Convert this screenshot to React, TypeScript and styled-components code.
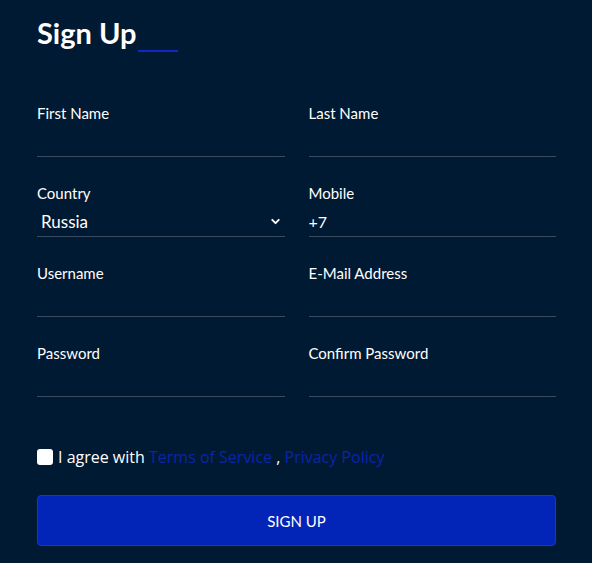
import { useState } from 'react';
import styled, { createGlobalStyle } from 'styled-components';
import { ChevronDown } from 'lucide-react';

const GlobalStyle = createGlobalStyle`
    body {
        margin: 0;
        background: #011a33;
        font-family: "Lato", "Liberation Sans", sans-serif;
        color: #fff;
    }
`

const Wrapper = styled.form`
    padding: 13px 36px 20px 37px;
    display: flex;
    flex-direction: column;
`

const Title = styled.h2`
    margin: 0 0 49px;
    font-size: 29px;
    line-height: 40px;
    font-weight: 700;
    &::after {
        content: "";
        display: inline-block;
        width: 40px;
        height: 2px;
        margin-left: 2px;
        background: #0a2bc4;
        vertical-align: -8px;
    }
`

const Grid = styled.div`
    display: grid;
    grid-template-columns: 1fr 1fr;
    column-gap: 24px;
    row-gap: 25px;
`

const Field = styled.div`
    display: flex;
    flex-direction: column;
    gap: 3px;
`

const Label = styled.label`
    font-size: 15px;
    line-height: 22px;
    color: #fff;
`

const Input = styled.input`
    height: 30px;
    box-sizing: border-box;
    background: transparent;
    border: none;
    border-bottom: 1px solid #3a4b5f;
    color: #fff;
    font-family: "Lato", "Liberation Sans", sans-serif;
    font-size: 16px;
    padding: 0;
    outline: none;
`

const SelectWrap = styled.div`
    position: relative;
    height: 30px;
    border-bottom: 1px solid #3a4b5f;
    box-sizing: border-box;
    svg {
        position: absolute;
        right: 3px;
        top: 8px;
        pointer-events: none;
    }
`

const Select = styled.select`
    appearance: none;
    width: 100%;
    height: 29px;
    background: transparent;
    border: none;
    color: #fff;
    font-family: "Lato", "Liberation Sans", sans-serif;
    font-size: 17px;
    padding: 0 0 0 4px;
    outline: none;
    option {
        color: #000;
    }
`

const Agree = styled.label`
    margin-top: 48px;
    display: flex;
    align-items: center;
    gap: 5px;
    font-family: "Open Sans", "Liberation Sans", sans-serif;
    font-size: 16px;
    line-height: 24px;
    color: #fff;
`

const Check = styled.input`
    appearance: none;
    width: 16px;
    height: 16px;
    margin: 0;
    background: #fff;
    border-radius: 3px;
    flex-shrink: 0;
`

const Link = styled.a`
    color: #0a25a8;
    text-decoration: none;
`

const Button = styled.button`
    margin-top: 26px;
    height: 51px;
    background: #0225b8;
    border: 1px solid #1836c4;
    border-radius: 4px;
    color: #fff;
    font-family: "Lato", "Liberation Sans", sans-serif;
    font-size: 15px;
    text-transform: uppercase;
    cursor: pointer;
`

const App = () => {
    const [details, setDetails] = useState({
        firstName: "", lastName: "", country: "Russia", mobile: "+7",
        username: "", email: "", password: "", confirm: ""
    })

    const set = (key: string) => (e: any) => setDetails({ ...details, [key]: e.target.value })

    return (
        <>
            <GlobalStyle />
            <Wrapper onSubmit={e => e.preventDefault()}>
                <Title>Sign Up</Title>
                <Grid>
                    <Field>
                        <Label>First Name</Label>
                        <Input value={details.firstName} onChange={set("firstName")} />
                    </Field>
                    <Field>
                        <Label>Last Name</Label>
                        <Input value={details.lastName} onChange={set("lastName")} />
                    </Field>
                    <Field>
                        <Label>Country</Label>
                        <SelectWrap>
                            <Select value={details.country} onChange={set("country")}>
                                <option>Russia</option>
                                <option>Ukraine</option>
                                <option>Kazakhstan</option>
                            </Select>
                            <ChevronDown size={13} strokeWidth={3.5} color="#fff" />
                        </SelectWrap>
                    </Field>
                    <Field>
                        <Label>Mobile</Label>
                        <Input value={details.mobile} onChange={set("mobile")} />
                    </Field>
                    <Field>
                        <Label>Username</Label>
                        <Input value={details.username} onChange={set("username")} />
                    </Field>
                    <Field>
                        <Label>E-Mail Address</Label>
                        <Input type="email" value={details.email} onChange={set("email")} />
                    </Field>
                    <Field>
                        <Label>Password</Label>
                        <Input type="password" value={details.password} onChange={set("password")} />
                    </Field>
                    <Field>
                        <Label>Confirm Password</Label>
                        <Input type="password" value={details.confirm} onChange={set("confirm")} />
                    </Field>
                </Grid>
                <Agree>
                    <Check type="checkbox" />
                    <span>I agree with <Link href="#">Terms of Service</Link> , <Link href="#">Privacy Policy</Link></span>
                </Agree>
                <Button type="submit">Sign Up</Button>
            </Wrapper>
        </>
    )
}

export default App;
